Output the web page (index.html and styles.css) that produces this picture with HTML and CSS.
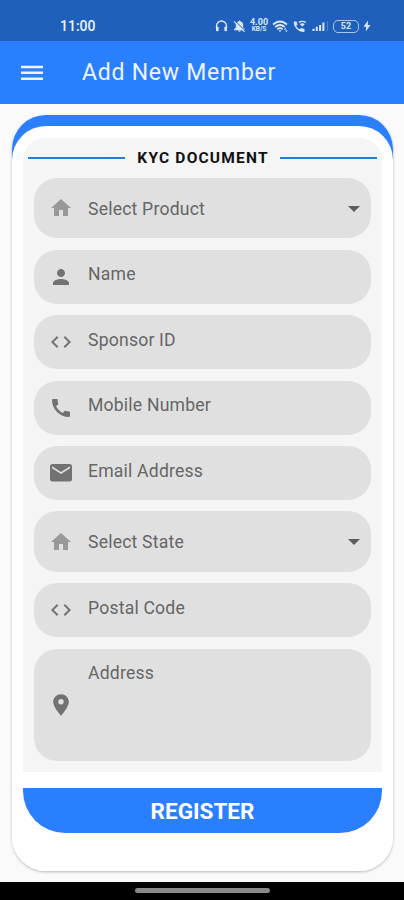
FILE: index.html
```html
<!DOCTYPE html>
<html lang="en">
<head>
<meta charset="utf-8">
<title>Add New Member</title>
<link rel="stylesheet" href="styles.css">
</head>
<body>
<svg class="defs" aria-hidden="true">
  <symbol id="home" viewBox="0 0 24 24"><path d="M10 20v-6h4v6h5v-8h3L12 3 2 12h3v8z"/></symbol>
  <symbol id="person" viewBox="0 0 24 24"><path d="M12 12c2.210 0 4-1.790 4-4s-1.790-4-4-4-4 1.790-4 4 1.790 4 4 4zm0 2c-2.670 0-8 1.340-8 4v2h16v-2c0-2.660-5.330-4-8-4z"/></symbol>
  <symbol id="code" viewBox="0 0 24 24"><path d="M9.400 16.600L4.800 12l4.600-4.600L8 6l-6 6 6 6 1.400-1.400zm5.200 0l4.600-4.600-4.600-4.600L16 6l6 6-6 6-1.400-1.400z"/></symbol>
  <symbol id="phone" viewBox="0 0 24 24"><path d="M20.010 15.380c-1.230 0-2.420-.2-3.530-.56-.35-.12-.74-.03-1.010.24l-1.570 1.970c-2.830-1.350-5.480-3.900-6.890-6.830l1.950-1.660c.27-.28.35-.67.24-1.020-.37-1.110-.56-2.300-.56-3.530 0-.54-.45-.99-.99-.99H4.190C3.650 3 3 3.240 3 3.990 3 13.280 10.730 21 20.010 21c.71 0 .99-.63.99-1.180v-3.450c0-.54-.45-.99-.99-.99z"/></symbol>
  <symbol id="mail" viewBox="0 0 24 24"><path d="M20.500 3H3.500C2.400 3 1 3.900 1 5v13c0 1.100.9 2.500 2 2.500h18c1.100 0 2-.9 2-2V5c0-1.100-1.400-2-2.500-2zM21 7.300l-9 5.700-9-5.700V5.200l9 5.700 9-5.700z"/></symbol>
  <symbol id="place" viewBox="0 0 24 24"><path d="M12 1.200C7.700 1.200 4.200 4.600 4.200 8.800c0 5.600 7.800 14 7.800 14s7.800-8.400 7.800-14c0-4.200-3.500-7.600-7.800-7.600zm0 10.300a2.700 2.700 0 0 1 0-5.400 2.700 2.700 0 0 1 0 5.400z"/></symbol>
</svg>

<div class="status">
  <span class="clock">11:00</span>
  <div class="indicators">
    <svg class="headset" viewBox="0 0 13 12"><path d="M1.500 8V6a5 5 0 0 1 10 0v2" fill="none" stroke="currentColor" stroke-width="1.300"/><rect x="1" y="6.500" width="2.600" height="4.800" rx="1"/><rect x="9.400" y="6.500" width="2.600" height="4.800" rx="1"/></svg>
    <svg class="muted" viewBox="0 0 13 12"><path d="M6.500.5a1 1 0 0 1 1 1c2 .5 2.700 2 2.700 3.700v2.500L12 9.300v.9H1v-.9l1.800-1.600V5.200c0-1.700.7-3.200 2.700-3.700a1 1 0 0 1 1-1zM5.300 10.600h2.400a1.200 1.200 0 0 1-2.400 0z"/><path d="M2.200 1l10.300 10" stroke="#2060bd" stroke-width="1"/><path d="M1 1.300L11.500 11.800" stroke="currentColor" stroke-width="1.100"/></svg>
    <div class="speed"><span>4.00</span><span class="unit">KB/S</span></div>
    <svg class="wifi" viewBox="0 0 17 13"><g fill="none" stroke="currentColor" stroke-width="1.700"><path d="M1 4.500q7-6 14 0M3.200 7q4.800-4 9.600 0M5.300 9.300q2.700-2.200 5.400 0"/></g><path d="M6.500 10.200h3L8 12zM12 9.500l1.300-1.800 1.300 1.800zM13 10.500h2.600l-1.300 1.800z"/></svg>
    <svg class="call" viewBox="0 0 14 13"><path d="M1 1.500h2.500l1 3-1.300 1.200c.8 1.700 1.900 2.800 3.600 3.600L8 8l3.500 1v2.500c0 .3-.2.500-.6.500C5.500 12 .8 7.500.8 2z"/><path d="M5.800 2.400q3.500-2 7 0" fill="none" stroke="currentColor" stroke-width="1.300"/><path d="M6.800 4.100q2.500-1.500 5 0L9.300 6.800z"/></svg>
    <svg class="signal" viewBox="0 0 17 12"><path d="M.5 8.800h2V11h-2zM3.800 6.800h2V11h-2zM7.100 5h2v6h-2zM10.400 2.500h2V11h-2z"/><path d="M15.200 1h.6v10h-.6z" opacity=".45"/></svg>
    <div class="battery">52</div>
    <svg class="bolt" viewBox="0 0 8 12"><path d="M5 .5L.5 6.700h2.700L2.700 11.500 7.500 5H4.700z"/></svg>
  </div>
</div>

<header class="appbar">
  <svg class="menu" viewBox="0 0 22 16"><path d="M0 .7h22v2.500H0zM0 6.500h22V9H0zM0 12.500h22V15H0z"/></svg>
  <h1>Add New Member</h1>
</header>

<main>
  <div class="frame">
    <div class="card">
      <section class="panel">
        <div class="heading"><i></i><h2>KYC DOCUMENT</h2><i></i></div>
        <div class="fields">
          <div class="field select"><svg class="icon"><use href="#home"/></svg><span>Select Product</span></div>
          <div class="field"><svg class="icon"><use href="#person"/></svg><span>Name</span></div>
          <div class="field"><svg class="icon"><use href="#code"/></svg><span>Sponsor ID</span></div>
          <div class="field"><svg class="icon"><use href="#phone"/></svg><span>Mobile Number</span></div>
          <div class="field"><svg class="icon"><use href="#mail"/></svg><span>Email Address</span></div>
          <div class="field select"><svg class="icon"><use href="#home"/></svg><span>Select State</span></div>
          <div class="field"><svg class="icon"><use href="#code"/></svg><span>Postal Code</span></div>
          <div class="field area"><svg class="icon"><use href="#place"/></svg><span>Address</span></div>
        </div>
      </section>
      <button class="register">REGISTER</button>
    </div>
  </div>
</main>
<footer class="gesture"><i></i></footer>
</body>
</html>
```
FILE: styles.css
```css
* { box-sizing: border-box; }
body {
  margin: 0;
  height: 900px;
  display: flex;
  flex-direction: column;
  overflow: hidden;
  background: #fafafa;
  font-family: Roboto, "Liberation Sans", sans-serif;
}
h1, h2 { margin: 0; }
svg { fill: currentColor; display: block; flex: none; }
.defs { display: none; }

.status {
  height: 41px;
  flex: none;
  display: flex;
  justify-content: space-between;
  align-items: center;
  padding: 11px 33px 0 60px;
  background: #2060bd;
  color: #dbe8fb;
}
.clock { font-size: 14px; line-height: 16px; font-weight: 500; color: #eef4ff; }
.indicators { display: flex; align-items: center; width: 156px; }
.headset { width: 13px; height: 12px; }
.muted { width: 13px; height: 12px; margin-left: 5px; }
.speed {
  width: 20px;
  margin-left: 3px;
  display: flex;
  flex-direction: column;
  align-items: center;
  font-size: 9px;
  line-height: 7px;
  font-weight: 700;
}
.speed .unit { font-size: 6.5px; line-height: 7px; }
.wifi { width: 17px; height: 13px; margin-left: 3px; }
.call { width: 14px; height: 13px; margin-left: 4px; }
.signal { width: 17px; height: 12px; margin-left: 5px; }
.battery {
  width: 26px;
  height: 13px;
  margin-left: 4px;
  border: 1.5px solid #a9c6f2;
  border-radius: 5px;
  font-size: 9px;
  line-height: 11px;
  font-weight: 700;
  text-align: center;
}
.bolt { width: 8px; height: 12px; margin-left: 4px; }

.appbar {
  height: 62.5px;
  flex: none;
  display: flex;
  align-items: center;
  padding: 1px 21px 0;
  background: #2a7fff;
  color: #edf4ff;
}
.menu { width: 22px; height: 16px; }
.appbar h1 { margin: 1px 0 0 39px; font-size: 23px; line-height: 28px; font-weight: 400; letter-spacing: .75px; }

main { flex: 1; padding: 11.5px 11px 0 12px; }
.frame {
  height: 756px;
  padding-top: 11px;
  background: linear-gradient(#2a7fff 60px, #fff 60px);
  border-radius: 34px;
  box-shadow: 0 1px 3px rgba(0, 0, 0, .28);
}
.card {
  height: 745px;
  padding: 11.5px 11px 0;
  background: #fff;
  border-radius: 34px;
}
.panel {
  height: 634.5px;
  background: #f5f5f5;
  border-radius: 22px 22px 0 0;
  padding: 10px 11px 0;
}
.heading { display: flex; align-items: center; height: 20px; margin: 0 -6px; }
.heading i { flex: 1; height: 2px; background: #1e7fdc; }
.heading h2 { margin: 0 11px 0 12px; font-size: 15.5px; line-height: 20px; font-weight: 700; letter-spacing: 1.2px; color: #111; }
.fields { display: flex; flex-direction: column; gap: 11.5px; margin-top: 10.5px; }
.field {
  height: 53.9px;
  display: flex;
  align-items: center;
  padding: 0 11px 0 15px;
  background: #e0e0e0;
  border-radius: 23px;
  color: #727272;
}
.icon { width: 24px; height: 24px; }
.field span { margin: -5px 0 0 15px; font-size: 17.6px; line-height: 22px; letter-spacing: .2px; color: #666; }
.select { height: 60.4px; }
.select .icon { color: #999; }
.select span { margin-top: 1px; }
.select::after {
  content: "";
  margin: 1px 0 0 auto;
  border: 6.5px solid transparent;
  border-top-color: #5c5c5c;
  border-bottom: 0;
}
.area { height: 112.5px; }
.area span { align-self: flex-start; margin-top: 13px; }
.register {
  display: block;
  width: 100%;
  height: 44.5px;
  margin-top: 16px;
  padding: 2px 0 0;
  border: 0;
  border-radius: 0 0 42px 42px;
  background: #2a7fff;
  color: #fff;
  font: 700 22.5px/42px Roboto, "Liberation Sans", sans-serif;
}
.gesture { height: 18px; flex: none; padding-top: 6px; background: #000; }
.gesture i { display: block; width: 135px; height: 5px; margin: 0 auto; border-radius: 3px; background: #888; }
```
